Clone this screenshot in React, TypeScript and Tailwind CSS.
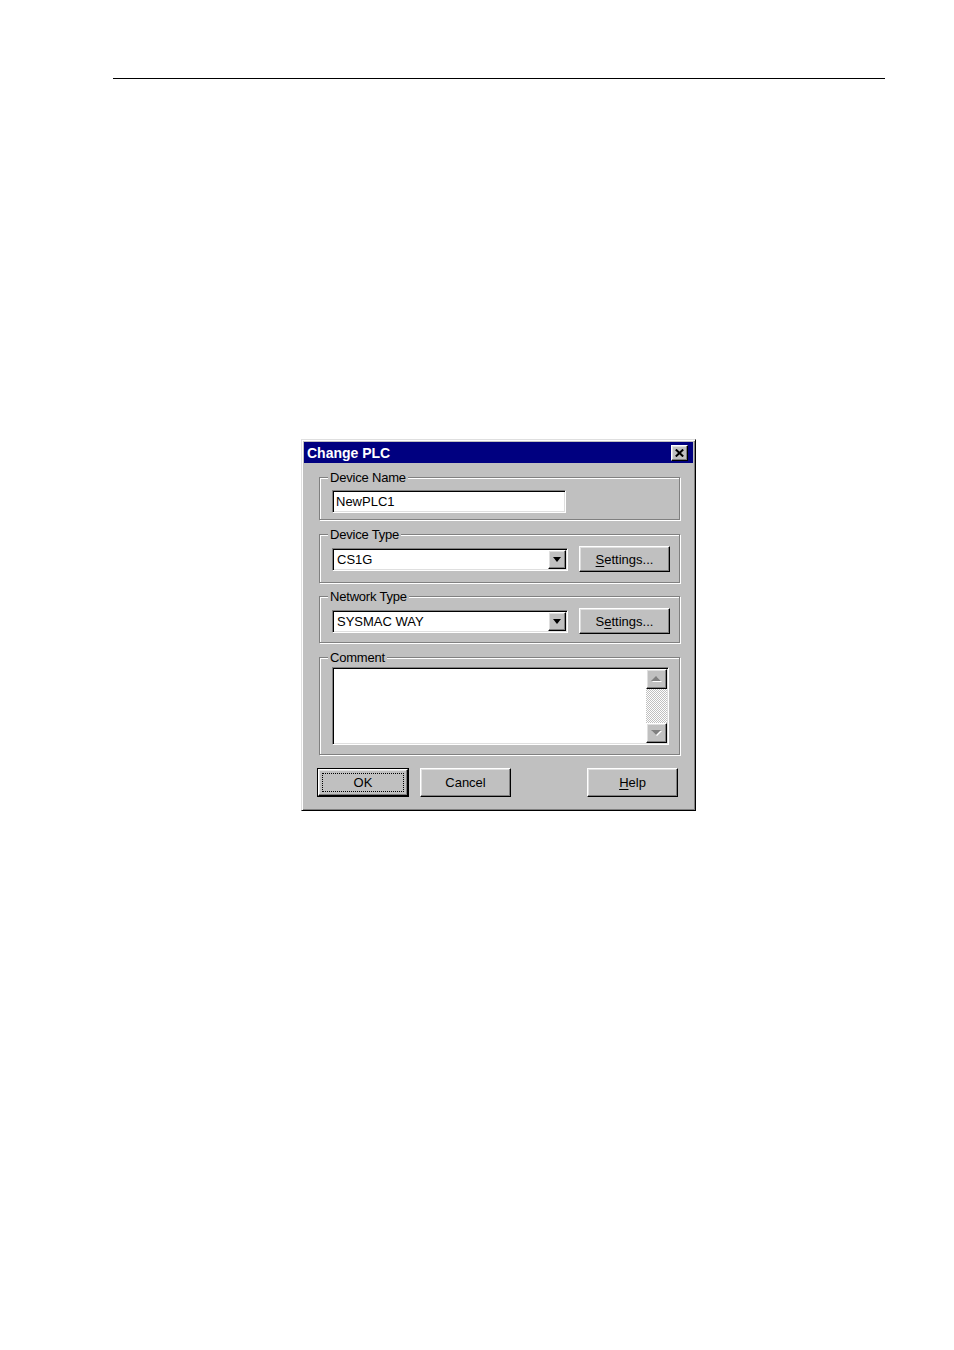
import React from "react";

const raised =
  "border border-t-white border-l-white border-r-black border-b-black shadow-[inset_-1px_-1px_0_#808080,inset_1px_1px_0_#dfdfdf]";
const sunken =
  "border border-t-[#808080] border-l-[#808080] border-r-white border-b-white shadow-[inset_1px_1px_0_#000,inset_-1px_-1px_0_#dfdfdf]";

function GroupBox({
  label,
  className,
  children,
}: {
  label: string;
  className: string;
  children?: React.ReactNode;
}) {
  return (
    <div
      className={`relative ml-[15px] w-[361px] border border-[#808080] shadow-[inset_1px_1px_0_#fff,1px_1px_0_#fff] ${className}`}
    >
      <span className="absolute left-[8px] top-[-8px] bg-[#c0c0c0] px-[2px] text-[13px] leading-[15px] tracking-[-0.2px]">
        {label}
      </span>
      {children}
    </div>
  );
}

function Combo({ value }: { value: string }) {
  return (
    <div className={`flex h-[23px] w-[236px] items-center bg-white p-[1px] ${sunken}`}>
      <span className="flex-1 pl-[3px] text-[13px] leading-[15px]">{value}</span>
      <div className={`flex h-[19px] w-[18px] items-center justify-center bg-[#c0c0c0] ${raised}`}>
        <svg width="8" height="5" viewBox="0 0 8 5">
          <path d="M0 0H8L4 5Z" fill="black" />
        </svg>
      </div>
    </div>
  );
}

function ScrollArrow({ up }: { up: boolean }) {
  return (
    <div className={`flex h-[20px] w-[21px] items-center justify-center bg-[#c0c0c0] ${raised}`}>
      <svg width="11" height="7" viewBox="0 0 11 7">
        {up ? (
          <>
            <path d="M5 0L10 5H0Z" fill="white" transform="translate(1,1)" />
            <path d="M5 0L10 5H0Z" fill="#808080" />
          </>
        ) : (
          <>
            <path d="M0 0H10L5 5Z" fill="white" transform="translate(1,1)" />
            <path d="M0 0H10L5 5Z" fill="#808080" />
          </>
        )}
      </svg>
    </div>
  );
}

export default function App() {
  return (
    <div className="min-h-[1350px] bg-white pt-[78px] font-['Liberation_Sans',Arial,sans-serif] text-black">
      <div className="ml-[113px] h-px w-[772px] bg-black" />

      <div
        className={`ml-[301px] mt-[360px] w-[395px] bg-[#c0c0c0] p-[2px] border border-t-[#dfdfdf] border-l-[#dfdfdf] border-r-black border-b-black shadow-[inset_1px_1px_0_#fff,inset_-1px_-1px_0_#808080]`}
      >
        {/* Title bar */}
        <div className="flex h-[21px] items-center justify-between bg-[#000080] pl-[3px] pr-[5px]">
          <span className="text-[14px] font-bold leading-[16px] text-white">Change PLC</span>
          <div className={`flex h-[16px] w-[17px] items-center justify-center bg-[#c0c0c0] ${raised}`}>
            <svg width="9" height="8" viewBox="0 0 9 8">
              <path d="M0.8 0.5L8.2 7.5M8.2 0.5L0.8 7.5" stroke="black" strokeWidth="2" />
            </svg>
          </div>
        </div>

        {/* Device Name */}
        <GroupBox label="Device Name" className="mt-[14px] h-[43px] pl-[12px] pt-[12px]">
          <div className={`flex h-[23px] w-[234px] items-center bg-white pl-[3px] ${sunken}`}>
            <span className="text-[13px] leading-[15px]">NewPLC1</span>
          </div>
        </GroupBox>

        {/* Device Type */}
        <GroupBox label="Device Type" className="mt-[14px] h-[49px] pl-[12px] pt-[11px]">
          <div className="flex h-[26px] items-center">
            <Combo value="CS1G" />
            <button
              className={`ml-[11px] h-[26px] w-[91px] bg-[#c0c0c0] text-[13px] leading-[15px] ${raised}`}
            >
              <span className="underline underline-offset-2">S</span>ettings...
            </button>
          </div>
        </GroupBox>

        {/* Network Type */}
        <GroupBox label="Network Type" className="mt-[13px] h-[47px] pl-[12px] pt-[11px]">
          <div className="flex h-[26px] items-center">
            <Combo value="SYSMAC WAY" />
            <button
              className={`ml-[11px] h-[26px] w-[91px] bg-[#c0c0c0] text-[13px] leading-[15px] ${raised}`}
            >
              S<span className="underline underline-offset-2">e</span>ttings...
            </button>
          </div>
        </GroupBox>

        {/* Comment */}
        <GroupBox label="Comment" className="mt-[14px] h-[98px] pl-[12px] pt-[9px]">
          <div className={`flex h-[78px] w-[337px] bg-white p-[1px] ${sunken}`}>
            <div className="flex-1" />
            <div className="flex w-[21px] flex-col">
              <ScrollArrow up />
              <div className="flex-1 bg-[image:repeating-conic-gradient(#c0c0c0_0_25%,#fff_0_50%)] bg-[length:2px_2px]" />
              <ScrollArrow up={false} />
            </div>
          </div>
        </GroupBox>

        {/* Buttons */}
        <div className="mb-[11px] mt-[13px] flex h-[29px] items-center pl-[13px] pr-[15px]">
          <div className="relative h-[29px] w-[92px] border border-black">
            <button className={`h-full w-full bg-[#c0c0c0] text-[13px] leading-[15px] ${raised}`}>
              OK
            </button>
            <span className="pointer-events-none absolute inset-[4px] border border-dotted border-black" />
          </div>
          <button
            className={`ml-[11px] h-[29px] w-[91px] bg-[#c0c0c0] text-[13px] leading-[15px] ${raised}`}
          >
            Cancel
          </button>
          <button
            className={`ml-auto h-[29px] w-[91px] bg-[#c0c0c0] text-[13px] leading-[15px] ${raised}`}
          >
            <span className="underline underline-offset-2">H</span>elp
          </button>
        </div>
      </div>
    </div>
  );
}
